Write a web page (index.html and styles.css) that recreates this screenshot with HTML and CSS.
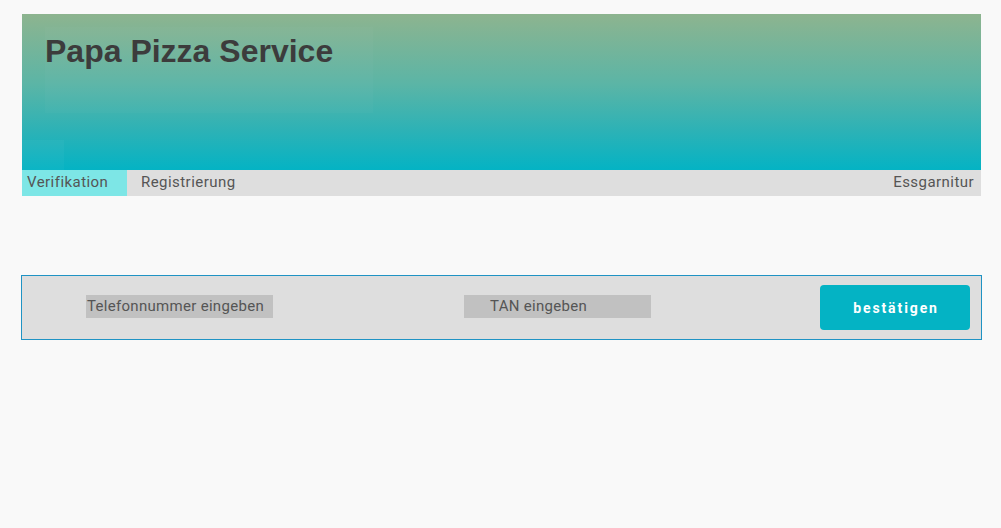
FILE: index.html
```html
<!DOCTYPE html>
<html lang="de">
<head>
<meta charset="utf-8">
<title>Papa Pizza Service</title>
<link rel="stylesheet" href="styles.css">
</head>
<body>
<div class="page">
  <header class="hero">
    <h1 class="title">Papa Pizza Service</h1>
    <div class="corner"></div>
  </header>
  <nav class="nav">
    <a class="tab active">Verifikation</a>
    <a class="tab">Registrierung</a>
    <span class="spacer"></span>
    <a class="tab right">Essgarnitur</a>
  </nav>
  <section class="verify">
    <div class="field phone">Telefonnummer eingeben</div>
    <div class="field tan">TAN eingeben</div>
    <button class="btn">bestätigen</button>
  </section>
</div>
</body>
</html>
```

FILE: styles.css
```css
html, body {
  margin: 0;
  padding: 0;
  background: #f9f9f9;
}
.page {
  padding: 14px 20px 0 22px;
  font-family: Roboto, "Liberation Sans", sans-serif;
}
.hero {
  position: relative;
  height: 156px;
  background: linear-gradient(to bottom, #8db48f 0%, #5bb5a6 45%, #2cb2b6 75%, #04b3c4 100%);
  padding: 13px 0 0 23px;
  box-sizing: border-box;
}
.title {
  margin: 0;
  width: 328px;
  height: 86px;
  box-sizing: border-box;
  padding-top: 6px;
  font-family: "Liberation Sans", Arial, sans-serif;
  font-weight: bold;
  font-size: 32px;
  line-height: 37px;
  color: #3c3c3c;
  background: rgba(255, 255, 255, 0.025);
}
.corner {
  position: absolute;
  left: 0;
  bottom: 0;
  width: 42px;
  height: 30px;
  background: rgba(255, 255, 255, 0.03);
}
.nav {
  display: flex;
  height: 26px;
  background: #dedede;
}
.tab {
  display: block;
  font-size: 15px;
  line-height: 24px;
  letter-spacing: 0.45px;
  color: #555;
  padding: 0 5px;
}
.tab.active {
  background: #7de6e6;
  width: 95px;
}
.tab + .tab {
  margin-left: 9px;
}
.spacer { flex: 1; }
.tab.right { padding-right: 7px; }
.verify {
  margin: 79px -1px 0 -1px;
  height: 63px;
  border: 1px solid #1f93c4;
  background: #dedede;
  display: flex;
  align-items: flex-start;
}
.field {
  height: 23px;
  width: 187px;
  box-sizing: border-box;
  background: #c1c1c1;
  font-size: 15px;
  line-height: 22px;
  letter-spacing: 0.3px;
  color: #555;
  margin-top: 19px;
  white-space: nowrap;
}
.phone {
  margin-left: 64px;
  padding-left: 1px;
}
.tan {
  margin-left: 191px;
  padding-left: 26px;
}
.btn {
  margin: 9px 0 0 169px;
  width: 150px;
  height: 45px;
  border: none;
  border-radius: 4px;
  background: #04b3c4;
  color: #fff;
  font-family: Roboto, "Liberation Sans", sans-serif;
  font-weight: bold;
  font-size: 14px;
  letter-spacing: 1.9px;
  padding: 0 0 0 2px;
}
```
